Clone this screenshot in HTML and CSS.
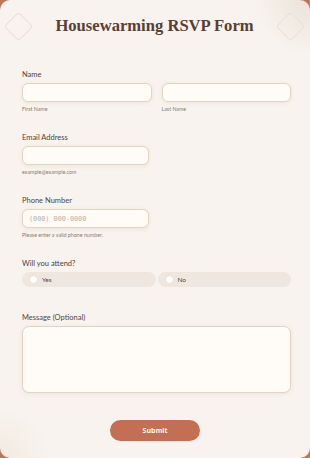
FILE: index.html
```html
<!DOCTYPE html>
<html lang="en">
<head>
    <meta charset="UTF-8">
    <title>Housewarming RSVP Form</title>
    <link rel="stylesheet" href="styles.css">
</head>
<body>
    <div class="card">
        <header class="header">
            <span class="diamond"></span>
            <h1>Housewarming RSVP Form</h1>
            <span class="diamond"></span>
        </header>

        <form class="rsvp-form">
            <div class="field">
                <label class="label">Name</label>
                <div class="row">
                    <div class="col">
                        <input type="text" class="input">
                        <span class="hint">First Name</span>
                    </div>
                    <div class="col">
                        <input type="text" class="input">
                        <span class="hint">Last Name</span>
                    </div>
                </div>
            </div>

            <div class="field">
                <label class="label">Email Address</label>
                <input type="email" class="input input-half">
                <span class="hint">example@example.com</span>
            </div>

            <div class="field">
                <label class="label">Phone Number</label>
                <input type="tel" class="input input-half" placeholder="(000) 000-0000">
                <span class="hint">Please enter a valid phone number.</span>
            </div>

            <div class="field field-radio">
                <label class="label">Will you attend?</label>
                <div class="radios">
                    <label class="radio"><span class="dot"></span>Yes</label>
                    <label class="radio"><span class="dot"></span>No</label>
                </div>
            </div>

            <div class="field">
                <label class="label">Message (Optional)</label>
                <textarea class="input textarea"></textarea>
            </div>

            <div class="actions">
                <button type="submit" class="submit">Submit</button>
            </div>
        </form>
    </div>
</body>
</html>
```

FILE: styles.css
```css
/* Page */
html, body {
    margin: 0;
    height: 100%;
}

body {
    background-color: #c27457;
    font-family: Lato, "Open Sans", sans-serif;
}

.card {
    box-sizing: border-box;
    height: 458px;
    padding: 0 19px 0 22px;
    border-radius: 10px;
    background-color: #f8f3ee;
    background-image:
        radial-gradient(circle at 100% 0%, #ebe2d8 0, rgba(235, 226, 216, 0) 55px),
        radial-gradient(circle at 0% 100%, #f1eae1 0, rgba(241, 234, 225, 0) 50px);
}

/* Header */
.header {
    display: flex;
    align-items: center;
    justify-content: space-between;
    height: 52px;
    margin: 0 -10px 0 -14px;
}

.header h1 {
    margin: 0;
    font-family: "Liberation Serif", serif;
    font-size: 16.6px;
    font-weight: bold;
    color: #5a3f35;
}

.diamond {
    width: 19px;
    height: 19px;
    border: 1px solid #ebe1d7;
    border-radius: 4px;
    transform: rotate(45deg);
}

/* Form */
.rsvp-form {
    display: flex;
    flex-direction: column;
    gap: 20px;
    padding-top: 18px;
}

.field {
    display: flex;
    flex-direction: column;
    align-items: flex-start;
}

.field-radio {
    margin-bottom: 6px;
}

.label {
    height: 10px;
    line-height: 10px;
    font-size: 7.5px;
    color: #54433c;
    margin-bottom: 3px;
}

.row {
    display: flex;
    gap: 10px;
    width: 100%;
}

.col {
    flex: 1;
    display: flex;
    flex-direction: column;
}

.input {
    box-sizing: border-box;
    width: 100%;
    height: 19px;
    padding: 0 6px;
    border: 1px solid #e2d3c5;
    border-radius: 6px;
    background-color: #fffbf7;
    box-shadow: 0 1px 4px rgba(180, 150, 120, 0.15);
    font-family: "DejaVu Sans Mono", monospace;
    font-size: 6.8px;
    color: #6b5a52;
    outline: none;
}

.input::placeholder {
    color: #b8aea7;
}

.input-half {
    width: 127px;
}

.hint {
    height: 8px;
    line-height: 8px;
    margin-top: 3px;
    font-size: 5.3px;
    color: #8d7b72;
}

/* Radios */
.radios {
    display: flex;
    gap: 2px;
    width: 100%;
}

.radio {
    flex: 1;
    display: flex;
    align-items: center;
    gap: 5px;
    height: 15px;
    padding-left: 8px;
    border-radius: 8px;
    background-color: #efe7df;
    font-size: 6.5px;
    color: #5b4840;
}

.dot {
    width: 7px;
    height: 7px;
    border-radius: 50%;
    background-color: #fffdfb;
    box-shadow: 0 0 1px rgba(150, 120, 100, 0.3);
}

.textarea {
    height: 67px;
    border-radius: 7px;
    resize: none;
}

/* Button */
.actions {
    display: flex;
    justify-content: center;
    padding-top: 7px;
    padding-right: 3px;
}

.submit {
    width: 90px;
    height: 21px;
    border: none;
    border-radius: 11px;
    background-color: #c46f53;
    color: #fff6f0;
    font-family: "Open Sans", sans-serif;
    font-size: 7px;
    font-weight: bold;
    cursor: pointer;
}
```
